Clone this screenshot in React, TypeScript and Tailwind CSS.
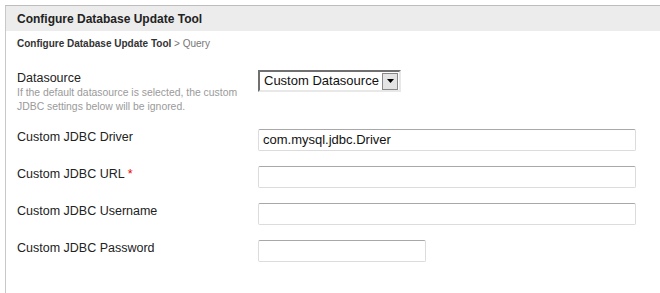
import React from "react";

function Row({ label, children, required }: { label: string; children: React.ReactNode; required?: boolean }) {
  return (
    <div className="flex items-start">
      <div className="w-[241px] pt-[1px] text-[12.5px] leading-[14px] text-[#222]">
        {label}
        {required && <span className="text-[#e00] ml-[3px]">*</span>}
      </div>
      {children}
    </div>
  );
}

function Input({ value, width }: { value?: string; width: string }) {
  return (
    <div
      className={`${width} h-[22px] border border-[#dcdcdc] border-t-[#a8a8a8] rounded-[2px] bg-white px-[4px] flex items-center text-[13px] text-[#111]`}
    >
      {value}
    </div>
  );
}

export default function App() {
  return (
    <div
      className="w-[660px] h-[293px] bg-white overflow-hidden pt-[5px] pl-[5px]"
      style={{ fontFamily: '"Liberation Sans", Arial, sans-serif' }}
    >
      <div className="h-full border-l border-t border-[#bdbdbd] border-l-[#c8c8c8]">
        <div className="h-[25px] bg-[#ececec] pl-[11px] flex items-center text-[12px] font-bold text-[#222]">
          Configure Database Update Tool
        </div>
        <div className="pl-[11px]">
          <div className="mt-[6px] text-[10px] leading-[14px]">
            <span className="font-bold text-[#333]">Configure Database Update Tool</span>
            <span className="text-[#777]"> &gt; Query</span>
          </div>
          <div className="mt-[19px] flex flex-col gap-[15px]">
            <div className="flex items-start">
              <div className="w-[241px]">
                <div className="pt-[1px] text-[12.5px] leading-[14px] text-[#222]">Datasource</div>
                <div className="mt-[1px] text-[10.4px] leading-[14px] text-[#9a9a9a]">
                  If the default datasource is selected, the custom
                  <br />
                  JDBC settings below will be ignored.
                </div>
              </div>
              <div className="w-[143px] h-[22px] border-2 border-t-[#707070] border-l-[#707070] border-r-[#e8e8e8] border-b-[#e8e8e8] bg-white flex items-center justify-between pl-[4px] pr-[1px] text-[13px] text-[#111]">
                <span>Custom Datasource</span>
                <div className="w-[16px] h-[17px] bg-[#e4e4e4] border border-[#888] flex items-center justify-center">
                  <svg width="7" height="4" viewBox="0 0 7 4">
                    <path d="M0 0 H7 L3.5 4 Z" fill="#000" />
                  </svg>
                </div>
              </div>
            </div>
            <Row label="Custom JDBC Driver">
              <Input value="com.mysql.jdbc.Driver" width="w-[378px]" />
            </Row>
            <Row label="Custom JDBC URL" required>
              <Input width="w-[378px]" />
            </Row>
            <Row label="Custom JDBC Username">
              <Input width="w-[378px]" />
            </Row>
            <Row label="Custom JDBC Password">
              <Input width="w-[168px]" />
            </Row>
          </div>
        </div>
      </div>
    </div>
  );
}
